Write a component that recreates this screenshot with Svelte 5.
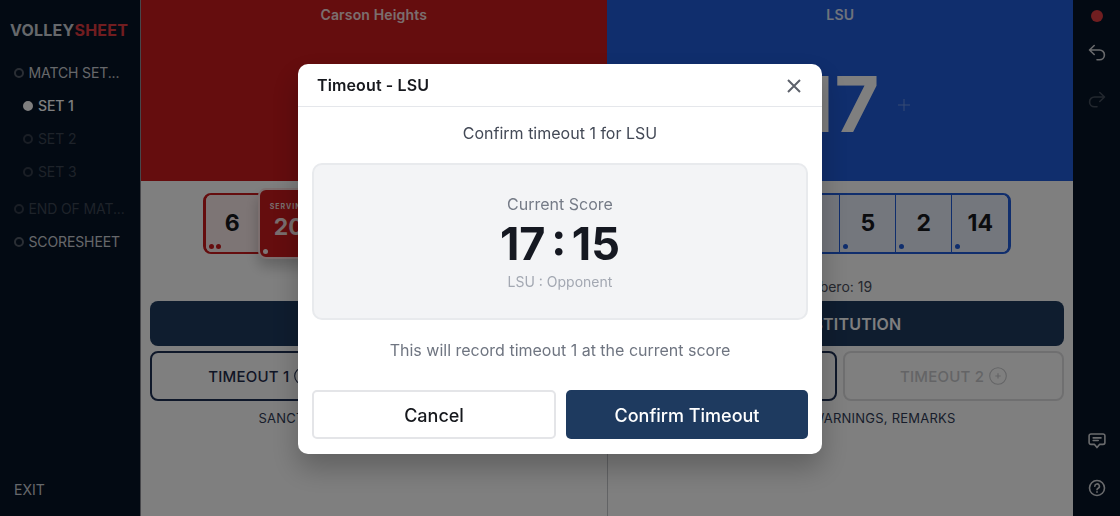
<script>
    let navItems = [
        { label: "MATCH SET...", state: "done" },
        { label: "SET 1", state: "active", sub: true },
        { label: "SET 2", state: "locked", sub: true },
        { label: "SET 3", state: "locked", sub: true },
        { label: "END OF MAT...", state: "locked", spaced: true },
        { label: "SCORESHEET", state: "done" },
    ];

    let teams = [
        {
            name: "Carson Heights",
            side: "left",
            score: 15,
            libero: 7,
            players: [
                { number: 6, dots: 2 },
                { number: 20, dots: 1, serving: true },
                { number: 11, dots: 1 },
                { number: 3, dots: 1 },
                { number: 9, dots: 1 },
                { number: 12, dots: 1 },
            ],
            secondTimeoutOpen: true,
        },
        {
            name: "LSU",
            side: "right",
            score: 17,
            libero: 19,
            players: [
                { number: 8, dots: 1 },
                { number: 10, dots: 1 },
                { number: 4, dots: 1 },
                { number: 5, dots: 1 },
                { number: 2, dots: 1 },
                { number: 14, dots: 1 },
            ],
            secondTimeoutOpen: false,
        },
    ];

    let modalOpen = $state(true);
</script>

{#snippet plusCircle()}
    <svg class="plus-circle" viewBox="0 0 18 18" fill="none" stroke="currentColor">
        <circle cx="9" cy="9" r="8.3" stroke-width="1.1" />
        <path d="M9 6.3v5.2M6.3 9h5.4" stroke-width="1.2" />
    </svg>
{/snippet}

<div class="app">
    <aside class="sidebar">
        <div class="logo">VOLLEY<span>SHEET</span></div>
        <nav>
            {#each navItems as item}
                <div class="nav-item {item.state}" class:sub={item.sub} class:spaced={item.spaced}>
                    <span class="bullet"></span>{item.label}
                </div>
            {/each}
        </nav>
        <div class="exit">EXIT</div>
    </aside>

    <main>
        {#each teams as team}
            <section class="team {team.side}">
                <div class="score-area">
                    <div class="team-name">{team.name}</div>
                    <div class="score-row">
                        <svg class="step" viewBox="0 0 12 12" stroke="currentColor"><path d="M0 6h12" /></svg>
                        <div class="score">{team.score}</div>
                        <svg class="step" viewBox="0 0 12 12" stroke="currentColor"><path d="M0 6h12M6 0v12" /></svg>
                    </div>
                </div>
                <div class="lineup">
                    {#each team.players as player}
                        <div class="player" class:serving={player.serving}>
                            {#if player.serving}<small>SERVING</small>{/if}
                            <b>{player.number}</b>
                            <div class="dots">
                                {#each { length: player.dots } as _}<i></i>{/each}
                            </div>
                        </div>
                    {/each}
                </div>
                <div class="libero">Libero: {team.libero}</div>
                <div class="actions">
                    <button class="substitution">SUBSTITUTION</button>
                    <div class="timeouts">
                        <button class="timeout">TIMEOUT 1 {@render plusCircle()}</button>
                        <button class="timeout" disabled={!team.secondTimeoutOpen}>TIMEOUT 2 {@render plusCircle()}</button>
                    </div>
                </div>
                <div class="sanctions">SANCTIONS, WARNINGS, REMARKS</div>
            </section>
        {/each}
    </main>

    <aside class="tools">
        <span class="record"></span>
        <svg class="undo" viewBox="0 0 18 18" fill="none" stroke="currentColor">
            <path d="M6.2 1.5 1.5 6l4.7 4.5M1.5 6h10a4.9 4.9 0 0 1 0 9.8H9" />
        </svg>
        <svg class="redo" viewBox="0 0 18 18" fill="none" stroke="currentColor">
            <path d="M11.8 1.5 16.5 6l-4.7 4.5M16.5 6h-10a4.9 4.9 0 0 0 0 9.8H9" />
        </svg>
        <svg class="comment" viewBox="0 0 18 18" fill="none" stroke="currentColor">
            <path d="M3 2h12a1.9 1.9 0 0 1 1.9 1.9v6.6a1.9 1.9 0 0 1-1.9 1.9h-3.5L9 15.6l-2.5-3.2H3a1.9 1.9 0 0 1-1.9-1.9V3.9A1.9 1.9 0 0 1 3 2zM5.2 5.9h7.800M5.2 8.5h5" />
        </svg>
        <svg class="help" viewBox="0 0 18 18" fill="none" stroke="currentColor">
            <circle cx="9" cy="9" r="7.5" />
            <path d="M6.8 7.2a2.3 2.3 0 1 1 3.4 2c-.8.45-1.2.8-1.2 1.6M9 12.8v.4" />
        </svg>
    </aside>
</div>

{#if modalOpen}
    <div class="overlay">
        <div class="modal" role="dialog">
            <header>
                <h2>Timeout - LSU</h2>
                <button class="close" aria-label="Close" onclick={() => (modalOpen = false)}>
                    <svg viewBox="0 0 14 14" stroke="currentColor"><path d="M1 1l12 12M13 1 1 13" /></svg>
                </button>
            </header>
            <p class="question">Confirm timeout 1 for LSU</p>
            <div class="current">
                <div class="current-label">Current Score</div>
                <div class="current-score">17 : 15</div>
                <div class="current-teams">LSU : Opponent</div>
            </div>
            <p class="note">This will record timeout 1 at the current score</p>
            <footer>
                <button class="cancel" onclick={() => (modalOpen = false)}>Cancel</button>
                <button class="confirm">Confirm Timeout</button>
            </footer>
        </div>
    </div>
{/if}

<style>
    :global(body) {
        font-family: Inter, "Liberation Sans", sans-serif;
        overflow: hidden;
    }

    button {
        font-family: inherit;
        padding: 0;
        border: none;
    }

    .app {
        display: flex;
        height: 516px;
        background: #fff;
    }

    .sidebar {
        box-sizing: border-box;
        width: 140px;
        padding: 20px 0 16px;
        display: flex;
        flex-direction: column;
        background: #061426;
        color: #cdd0d6;
    }

    .logo {
        padding-left: 10px;
        font-size: 16px;
        line-height: 20px;
        font-weight: 700;
        letter-spacing: 0.22px;
    }

    .logo span {
        color: #e23b41;
    }

    nav {
        margin-top: 16px;
        flex: 1;
    }

    .nav-item {
        display: flex;
        align-items: center;
        gap: 5px;
        height: 33px;
        padding-left: 13.5px;
        font-size: 14px;
        letter-spacing: -0.12px;
        white-space: nowrap;
    }

    .nav-item.sub {
        padding-left: 23px;
    }

    .nav-item.spaced {
        margin-top: 4px;
    }

    .nav-item.active {
        color: #fff;
        font-weight: 500;
    }

    .nav-item.locked {
        color: #3d4654;
    }

    .bullet {
        box-sizing: border-box;
        width: 10px;
        height: 10px;
        border: 2px solid #555d69;
        border-radius: 50%;
    }

    .locked .bullet {
        border-color: #343d4b;
    }

    .active .bullet {
        background: #fff;
        border-color: #fff;
    }

    .exit {
        padding-left: 14px;
        font-size: 14px;
        line-height: 20px;
        letter-spacing: 0;
    }

    main {
        flex: 1;
        display: flex;
        border-left: 1px solid #8e8e96;
    }

    .team {
        flex: 1;
        display: flex;
        flex-direction: column;
        align-items: center;
        --team: #ca1a1c;
        --tint: #fbebeb;
    }

    .team.right {
        --team: #205cda;
        --tint: #e9eefb;
        border-left: 1px solid #c4c6ca;
    }

    .score-area {
        width: 100%;
        height: 181px;
        background: var(--team);
        color: #fff;
        text-align: center;
    }

    .right .score-area {
        margin-left: -1px;
        padding-left: 1px;
    }

    .team-name {
        padding-top: 5px;
        font-size: 14px;
        line-height: 20px;
        font-weight: 600;
        letter-spacing: 0.15px;
        opacity: 0.85;
    }

    .score-row {
        display: flex;
        align-items: center;
        justify-content: center;
        height: 159px;
    }

    .score {
        width: 116px;
        margin-top: -2px;
        font-size: 77px;
        font-weight: 700;
        letter-spacing: 1px;
    }

    .step {
        width: 12px;
        height: 12px;
        opacity: 0.35;
    }

    .lineup {
        display: flex;
        margin-top: 12px;
        height: 57px;
        border: 2px solid var(--team);
        border-left-width: 3px;
        border-right-width: 3px;
        border-radius: 8px;
    }

    .player {
        position: relative;
        box-sizing: border-box;
        width: 56px;
        display: flex;
        flex-direction: column;
        align-items: center;
        justify-content: center;
        border-right: 1px solid var(--team);
        background: var(--tint);
        color: #16181d;
        font-size: 23px;
    }

    .player:first-child {
        padding-right: 2px;
        border-radius: 6px 0 0 6px;
    }

    .player:last-child {
        border-right: none;
        border-radius: 0 6px 6px 0;
    }

    .player b {
        margin-bottom: 1px;
    }

    .dots {
        position: absolute;
        left: 3px;
        bottom: 3px;
        display: flex;
        gap: 2px;
    }

    .dots i {
        width: 5px;
        height: 5px;
        border-radius: 50%;
        background: var(--team);
    }

    .player.serving {
        flex: none;
        width: 62px;
        margin: -7px -2px -7px -4px;
        border: 2px solid #f8dede;
        border-radius: 8px;
        background: var(--team);
        color: #f3dede;
        box-shadow: 0 8px 14px rgba(0, 0, 0, 0.22);
    }

    .serving small {
        font-size: 7px;
        font-weight: 700;
        letter-spacing: 1px;
        margin-bottom: 2px;
    }

    .serving .dots i {
        background: #fbebeb;
    }

    .player.serving b {
        margin-bottom: 4px;
    }

    .libero {
        margin-top: 22px;
        font-size: 14px;
        line-height: 21px;
        color: #4b505c;
    }

    .actions {
        align-self: stretch;
        margin: 4px 9px 0;
        display: flex;
        flex-direction: column;
        gap: 5px;
    }

    .substitution {
        height: 45px;
        border-radius: 8px;
        background: #1e3a5f;
        color: #fff;
        font-size: 16px;
        font-weight: 600;
        letter-spacing: 0.2px;
    }

    .timeouts {
        display: flex;
        gap: 6px;
    }

    .timeout {
        flex: 1;
        height: 50px;
        display: flex;
        align-items: center;
        justify-content: center;
        gap: 5px;
        border: 2px solid #1e3054;
        border-radius: 8px;
        background: transparent;
        color: #1f2c4c;
        font-size: 15px;
        font-weight: 500;
        letter-spacing: 0.2px;
    }

    .timeout:disabled {
        border-color: #dfdfe1;
        color: #c8c9cc;
    }

    .plus-circle {
        width: 18px;
        height: 18px;
    }

    .sanctions {
        margin-top: 7px;
        font-size: 13px;
        line-height: 20px;
        letter-spacing: 0.23px;
        color: #303b56;
    }

    .tools {
        width: 47px;
        display: flex;
        flex-direction: column;
        align-items: center;
        background: #061426;
        color: #d4d6da;
    }

    .tools svg {
        width: 18px;
        height: 18px;
        stroke-width: 1.6;
        stroke-linecap: round;
        stroke-linejoin: round;
    }

    .record {
        width: 12px;
        height: 12px;
        margin-top: 10px;
        border-radius: 50%;
        background: #e03c40;
    }

    .undo {
        margin-top: 22px;
    }

    .redo {
        margin-top: 29px;
        opacity: 0.3;
    }

    .comment {
        margin-top: auto;
    }

    .tools .help {
        margin: 29px 0 19px;
    }

    .overlay {
        position: fixed;
        inset: 0;
        z-index: 10;
        display: flex;
        justify-content: center;
        align-items: flex-start;
        background: rgba(0, 0, 0, 0.5);
    }

    .modal {
        box-sizing: border-box;
        width: 524px;
        height: 390px;
        margin-top: 64px;
        border-radius: 10px;
        background: #fff;
        box-shadow: 0 14px 28px rgba(0, 0, 0, 0.25);
        text-align: center;
    }

    header {
        display: flex;
        align-items: center;
        justify-content: space-between;
        height: 42px;
        padding: 0 21px 0 19px;
        border-bottom: 1px solid #e5e7eb;
    }

    h2 {
        margin: 0;
        font-size: 16px;
        font-weight: 600;
        letter-spacing: 0.12px;
        color: #16181d;
    }

    .close {
        height: 14px;
        margin-top: 2px;
        background: none;
        color: #5d616b;
        cursor: pointer;
    }

    .close svg {
        display: block;
        width: 14px;
        height: 14px;
        stroke-width: 2;
    }

    p {
        margin: 0;
        font-size: 16px;
        line-height: 24px;
    }

    .question {
        padding: 14px 0 18px;
        color: #434956;
    }

    .current {
        box-sizing: border-box;
        height: 157px;
        margin: 0 14px;
        padding-top: 28px;
        border: 2px solid #e8eaed;
        border-radius: 10px;
        background: #f3f4f6;
    }

    .current-label {
        font-size: 16px;
        line-height: 22px;
        color: #757b87;
    }

    .current-score {
        font-size: 45px;
        line-height: 58px;
        font-weight: 700;
        word-spacing: -5px;
        color: #151821;
    }

    .current-teams {
        font-size: 14px;
        line-height: 17px;
        color: #a3a8b2;
    }

    .note {
        padding: 18px 0 28px;
        color: #6f7581;
    }

    footer {
        display: flex;
        gap: 10px;
        padding: 0 14px;
    }

    footer button {
        height: 49px;
        border-radius: 5px;
        font-size: 18px;
        font-weight: 500;
    }

    .cancel {
        width: 244px;
        padding-top: 1px;
        border: 2px solid #e4e5e8;
        background: #fff;
        color: #16181d;
    }

    .confirm {
        flex: 1;
        padding-top: 1px;
        background: #1e3a5f;
        color: #fff;
    }
</style>
